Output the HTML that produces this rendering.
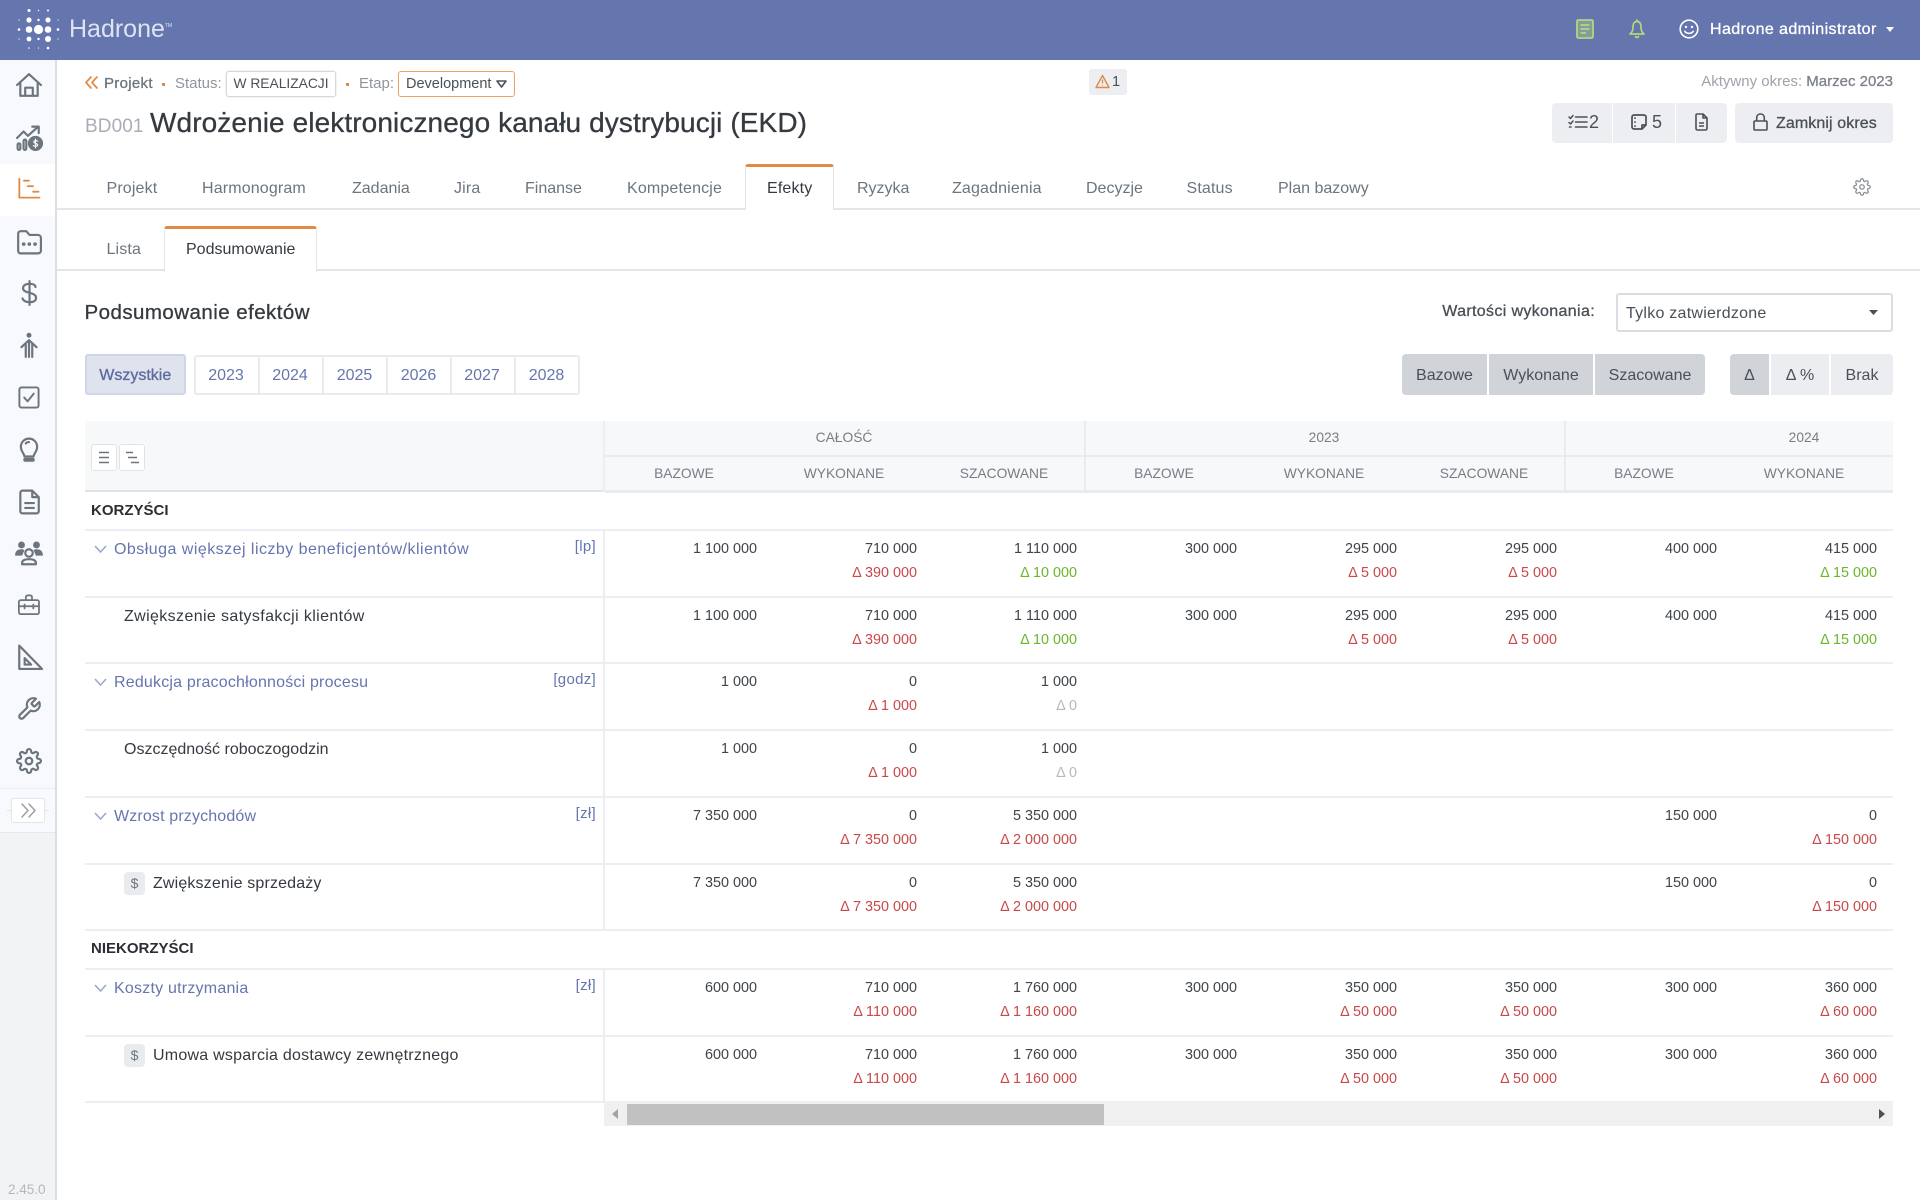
<!DOCTYPE html>
<html lang="pl">
<head>
<meta charset="utf-8">
<title>Hadrone</title>
<style>
*{box-sizing:border-box;margin:0;padding:0}
html,body{width:1920px;height:1200px;overflow:hidden;background:#fff;font-family:"Liberation Sans",sans-serif;font-size:16px;color:#343a40}
.a{position:absolute;white-space:nowrap}
svg{position:absolute;overflow:visible;fill:none}
.ic{stroke:#6c757d;stroke-width:2;stroke-linecap:round;stroke-linejoin:round;width:26px;height:26px;left:15.5px}
.m{-webkit-text-stroke:.3px currentColor}
.tab{position:absolute;top:179px;line-height:20px;font-size:16px;letter-spacing:.15px;color:#6c757d;white-space:nowrap}
.yb{position:absolute;top:0;height:36px;width:64px;color:#6576af;text-align:center;line-height:37px;font-size:16px}
.yd{position:absolute;top:355px;width:2px;height:40px;background:#e9ebef}
.gb{position:absolute;top:354px;height:41px;background:#d0d3d8;color:#495057;text-align:center;line-height:43px;font-size:16px}
.gb.off{background:#ecedf1}
.hd{position:absolute;width:160px;text-align:center;font-size:13.8px;color:#777d85;line-height:16px;white-space:nowrap}
.hl{position:absolute;background:#e9ebef}
.r{position:absolute;left:0;width:1893px;height:67px}
.r .v,.r .d{position:absolute;width:160px;text-align:right;font-size:14.4px;line-height:18px;white-space:nowrap}
.r .v{top:10px;color:#3f454b}
.r .d{top:34px}
.red{color:#c9484a}.grn{color:#6cb52d}.gry{color:#b6b9be}
.c1{left:597px}.c2{left:757px}.c3{left:917px}.c4{left:1077px}.c5{left:1237px}.c6{left:1397px}.c7{left:1557px}.c8{left:1717px}
.ln{position:absolute;left:84.5px;width:1808.5px;height:2px;background:#eceef2}
.lab{position:absolute;font-size:16px;line-height:20px;white-space:nowrap}
.gl{left:114px;top:10px;color:#6576af}
.ch{left:124px;top:10px;color:#343a40}
.ch2{left:153px;top:10px;color:#343a40}
.un{position:absolute;right:1297px;top:7px;color:#6576af;font-size:15px;line-height:20px;letter-spacing:.3px}
.cv{left:94px;top:15px;width:13px;height:8px;stroke:#9aa8cc;stroke-width:1.6}
.ds{position:absolute;left:124px;top:8px;width:21px;height:23px;border-radius:4px;background:#e9ebef;color:#6c757d;font-size:14px;text-align:center;line-height:23px}
.sec{position:absolute;left:91px;font-weight:700;font-size:15px;line-height:20px;color:#2b2f33}
</style>
</head>
<body>

<!-- top bar -->
<div class="a" style="left:0;top:0;width:1920px;height:60px;background:#6576af"></div>
<svg style="left:0;top:0;width:70px;height:60px" fill="#fff">
<g fill="#fff">
<circle cx="38.5" cy="29.5" r="4.6"/><circle cx="29" cy="29.5" r="3.3"/><circle cx="48" cy="29.5" r="3.3"/>
<circle cx="29" cy="20" r="2.6"/><circle cx="48" cy="20" r="2.6"/><circle cx="29" cy="39" r="2.4"/><circle cx="48" cy="39" r="3"/>
<circle cx="38.5" cy="20" r="1.2"/><circle cx="38.5" cy="39" r="1.2"/><circle cx="19" cy="29.5" r="1.3"/><circle cx="58" cy="29.5" r="1.3"/>
<circle cx="19" cy="20" r=".6"/><circle cx="58" cy="20" r=".6"/><circle cx="19" cy="39" r=".6"/><circle cx="58" cy="39" r=".6"/>
<circle cx="29" cy="10.5" r="1.5"/><circle cx="38.5" cy="10.5" r=".7"/><circle cx="48" cy="10.5" r="1"/>
<circle cx="29" cy="48" r=".8"/><circle cx="38.5" cy="48" r=".6"/><circle cx="48" cy="48" r="1.3"/>
</g></svg>
<div class="a" style="left:69px;top:15px;font-size:25px;line-height:28px;color:#dfe3f0">Hadrone</div>
<div class="a" style="left:165px;top:23px;font-size:5px;line-height:6px;color:#dfe3f0">TM</div>

<svg style="left:1576px;top:19px;width:18px;height:20px" viewBox="0 0 18 20"><rect x="1" y="1" width="16" height="18" rx="1.5" fill="rgba(180,214,124,.4)" stroke="#b4d67c" stroke-width="1.800"/><path d="M4.500 6H13.500M4.500 10H13.500M4.500 14H10" stroke="#b4d67c" stroke-width="1.700"/></svg>
<svg style="left:1628px;top:19px;width:18px;height:20px" viewBox="0 0 18 20"><path d="M9 2.500C5.500 2.500 5 5.500 5 8.500C5 12 3.800 13.600 2 15H16C14.200 13.600 13 12 13 8.500C13 5.500 12.500 2.500 9 2.500ZM9 1V2.500M7.500 17.500C8 18.700 10 18.700 10.500 17.500" stroke="#b4d67c" stroke-width="1.700" stroke-linejoin="round" stroke-linecap="round"/></svg>
<svg style="left:1679px;top:19px;width:20px;height:20px" viewBox="0 0 20 20"><circle cx="10" cy="10" r="8.800" stroke="#fff" stroke-width="1.600"/><circle cx="7" cy="8" r="1.200" fill="#fff"/><circle cx="13" cy="8" r="1.200" fill="#fff"/><path d="M5.800 12.300C7.500 15 12.500 15 14.200 12.300" stroke="#fff" stroke-width="1.500" stroke-linecap="round"/></svg>
<div class="a m" style="left:1710px;top:20px;font-size:16px;line-height:20px;letter-spacing:.4px;color:#fff">Hadrone administrator</div>
<svg style="left:1886px;top:27px;width:8px;height:5px"><path d="M0 0H8L4 5Z" fill="#fff"/></svg>

<!-- sidebar -->
<div class="a" style="left:0;top:60px;width:57px;height:1140px;background:#f7f9fc;border-right:2px solid #dcdee2"></div>
<div class="a" style="left:0;top:164px;width:55px;height:52px;background:#fff"></div>
<div class="a" style="left:0;top:833px;width:55px;height:367px;background:#f2f3f5"></div>
<div class="a" style="left:0;top:788px;width:55px;height:1px;background:#eceef1"></div>
<div class="a" style="left:0;top:832px;width:55px;height:1px;background:#e6e8eb"></div>
<div class="a" style="left:7px;top:810px;width:42px;height:1px;background:#e1e3e7"></div>
<div class="a" style="left:11px;top:798px;width:34px;height:25px;background:#fff;border:1px solid #e3e5e9;border-radius:3px"></div>
<svg style="left:21px;top:803px;width:15px;height:15px" viewBox="0 0 15 15"><path d="M1 1L7 7.500L1 14M8 1L14 7.500L8 14" stroke="#9a9fa6" stroke-width="1.500" stroke-linecap="round" stroke-linejoin="round"/></svg>

<svg class="ic" style="top:72px" viewBox="0 0 24 24"><path d="M1 12L12 2L23 12M4 10V22H20V10M8.500 22V14.500H15.500V22"/></svg>
<svg class="ic" style="top:125px" viewBox="0 0 24 24"><path d="M1 12L7 6L11 10L20 2M15 1.500H21V7.500"/><rect x="1.500" y="17" width="2.500" height="6" rx="1.200"/><rect x="7" y="13.500" width="2.500" height="9.500" rx="1.200"/><circle cx="18" cy="17" r="6" fill="#6c757d"/><path d="M20 15C19 14 16.500 14.300 16.500 15.600C16.500 17.500 20 16.500 20 18.500C20 19.900 17.200 20 16 19M18 13V21" stroke="#f7f9fc" stroke-width="1.100"/></svg>
<svg class="ic" style="top:177px;left:17px;width:23px;height:22px;stroke:#e28a43" viewBox="0 0 24 24"><path d="M2 2V22.500H24M7 4H12.500M11 10H17M17 16H23"/></svg>
<svg class="ic" style="top:229px" viewBox="0 0 24 24"><path d="M2 4.500C2 3 3 2 4.500 2H9.500L12.500 5.500H20C21.500 5.500 23 6.500 23 8V20C23 21.500 22 22.500 20.500 22.500H4C3 22.500 2 21.500 2 20Z"/><path d="M7 14H7.200M12.200 14H12.400M17.500 14H17.700" stroke-width="3.200"/></svg>
<svg class="ic" style="top:280px" viewBox="0 0 24 24"><path d="M18 6.500C18 4.500 15.500 3.500 12.500 3.500C9 3.500 6.500 5 6.500 7.500C6.500 13 18.500 10.500 18.500 16.500C18.500 19.500 15.500 20.500 12.500 20.500C9 20.500 6.500 19 6 17M12.500 1V23"/></svg>
<svg class="ic" style="top:332px" viewBox="0 0 24 24"><circle cx="12" cy="3" r="2.300" fill="#6c757d" stroke="none"/><path d="M5 14L12 7.500L19 14M12 9.500V23M9 10.500V23M15 10.500V23" stroke-width="2"/></svg>
<svg class="ic" style="top:386px;left:17px;width:23px;height:23px" viewBox="0 0 24 24"><rect x="2.500" y="1.500" width="20" height="21" rx="2"/><path d="M7.500 12L11 16L17.500 8"/></svg>
<svg class="ic" style="top:437px" viewBox="0 0 24 24"><path d="M7.800 18C7.500 15 4.500 13.500 4.500 9C4.500 4.800 7.800 1.500 12 1.500C16.200 1.500 19.500 4.800 19.500 9C19.500 13.500 16.500 15 16.200 18ZM9 6C9.800 5 10.800 4.700 12 4.700"/><path d="M8.500 21H15.500" stroke-width="3.600"/></svg>
<svg class="ic" style="top:489px" viewBox="0 0 24 24"><path d="M4 3.500C4 2.300 5 1.500 6 1.500H15L21 7.500V20.500C21 21.700 20 22.500 19 22.500H6C5 22.500 4 21.700 4 20.500ZM15 1.500V7.500H21M8.500 13H16.500M8.500 17.500H16.500"/></svg>
<svg class="ic" style="top:540px;width:30px;left:13.500px" viewBox="0 0 28 24"><circle cx="7" cy="4.500" r="3.200" fill="#6c757d" stroke="none"/><circle cx="21" cy="4.500" r="3.200" fill="#6c757d" stroke="none"/><path d="M1 14.500C1 10.500 3 8.500 7 8.500C8 8.500 9 8.800 9.800 9.300L7.500 14.500ZM27 14.500C27 10.500 25 8.500 21 8.500C20 8.500 19 8.800 18.200 9.300L20.500 14.500Z" fill="#6c757d" stroke="none"/><circle cx="14" cy="12" r="3.500"/><path d="M7.500 22.500V21.500C7.500 19 10 17.800 14 17.800C18 17.800 20.500 19 20.500 21.500V22.500Z"/></svg>
<svg class="ic" style="top:594px;left:17px;width:23px;height:21px" viewBox="0 0 24 24"><path d="M9 7V3.500C9 2.500 9.800 1.500 11 1.500H14C15.200 1.500 16 2.500 16 3.500V7M3 7H22C23 7 24 8 24 9V21C24 22 23 23 22 23H3C2 23 1 22 1 21V9C1 8 2 7 3 7ZM1 14H24M7.500 12V16.500M17.500 12V16.500"/></svg>
<svg class="ic" style="top:644px" viewBox="0 0 24 24"><path d="M3 1.500L24 23H3ZM8 13L14 19H8Z"/></svg>
<svg class="ic" style="top:696px" viewBox="0 0 24 24"><path d="M14.700 6.300a1 1 0 0 0 0 1.400l1.600 1.600a1 1 0 0 0 1.400 0l3.770-3.770a6 6 0 0 1-7.940 7.940l-6.910 6.910a2.120 2.120 0 0 1-3-3l6.910-6.910a6 6 0 0 1 7.940-7.940l-3.760 3.760z"/></svg>
<svg class="ic" style="top:748px" viewBox="0 0 24 24"><circle cx="12" cy="12" r="3"/><path d="M19.400 15a1.650 1.650 0 0 0 .33 1.820l.06.06a2 2 0 0 1 0 2.830 2 2 0 0 1-2.830 0l-.06-.06a1.650 1.650 0 0 0-1.820-.33 1.650 1.650 0 0 0-1 1.510V21a2 2 0 0 1-2 2 2 2 0 0 1-2-2v-.09A1.650 1.650 0 0 0 9 19.400a1.650 1.650 0 0 0-1.820.33l-.06.06a2 2 0 0 1-2.830 0 2 2 0 0 1 0-2.830l.06-.06a1.650 1.650 0 0 0 .33-1.820 1.650 1.650 0 0 0-1.510-1H3a2 2 0 0 1-2-2 2 2 0 0 1 2-2h.09A1.650 1.650 0 0 0 4.600 9a1.650 1.650 0 0 0-.33-1.820l-.06-.06a2 2 0 0 1 0-2.830 2 2 0 0 1 2.830 0l.06.06a1.650 1.650 0 0 0 1.820.33H9a1.650 1.650 0 0 0 1-1.510V3a2 2 0 0 1 2-2 2 2 0 0 1 2 2v.09a1.650 1.650 0 0 0 1 1.510 1.650 1.650 0 0 0 1.820-.33l.06-.06a2 2 0 0 1 2.830 0 2 2 0 0 1 0 2.830l-.06.06a1.650 1.650 0 0 0-.33 1.820V9a1.650 1.650 0 0 0 1.510 1H21a2 2 0 0 1 2 2 2 2 0 0 1-2 2h-.09a1.650 1.650 0 0 0-1.510 1z"/></svg>
<div class="a" style="left:8px;top:1182px;font-size:13.500px;line-height:15px;color:#b4b8bc">2.45.0</div>

<!-- breadcrumb -->
<svg style="left:85px;top:76px;width:13px;height:13px" viewBox="0 0 13 13"><path d="M6 1L1 6.500L6 12M12 1L7 6.500L12 12" stroke="#e28a43" stroke-width="1.700" stroke-linecap="round" stroke-linejoin="round"/></svg>
<div class="a m" style="left:104px;top:75px;font-size:15px;line-height:18px;letter-spacing:.3px;color:#6c757d">Projekt</div>
<div class="a" style="left:162px;top:82.500px;width:3px;height:3px;background:#e28a43"></div>
<div class="a" style="left:175px;top:75px;font-size:15px;line-height:18px;color:#8f959c">Status:</div>
<div class="a" style="left:226px;top:71px;width:110px;height:26px;border:1px solid #d5d8dc;border-radius:3px;box-shadow:0 0 0 .5px #e3e5e8;font-size:13.800px;line-height:24px;text-align:center;color:#495057">W REALIZACJI</div>
<div class="a" style="left:346px;top:82.500px;width:3px;height:3px;background:#e28a43"></div>
<div class="a" style="left:359px;top:75px;font-size:15px;line-height:18px;color:#8f959c">Etap:</div>
<div class="a" style="left:398px;top:71px;width:117px;height:26px;border:1.500px solid #eaa365;border-radius:3px;font-size:14.500px;line-height:24px;padding-left:7px;color:#495057">Development</div>
<svg style="left:496px;top:80px;width:11px;height:8px" viewBox="0 0 11 8"><path d="M1 1H10L5.500 7Z" stroke="#495057" stroke-width="1.600" stroke-linejoin="round"/></svg>

<div class="a" style="left:85px;top:114px;font-size:19px;line-height:26px;letter-spacing:.1px;color:#a9adb6">BD001</div>
<div class="a m" style="left:150px;top:106px;font-size:28px;line-height:34px;letter-spacing:.1px;color:#343a40">Wdrożenie elektronicznego kanału dystrybucji (EKD)</div>

<!-- warning + period -->
<div class="a" style="left:1089px;top:69px;width:38px;height:26px;background:#eceef2;border-radius:3px"></div>
<svg style="left:1095px;top:74px;width:15px;height:15px" viewBox="0 0 15 15"><path d="M7.500 1.500L14 13.500H1Z" stroke="#e28a43" stroke-width="1.400" stroke-linejoin="round"/><path d="M7.500 5.500V9.500M7.500 11V11.600" stroke="#e28a43" stroke-width="1.300"/></svg>
<div class="a" style="left:1112px;top:73px;font-size:14.500px;line-height:18px;color:#495057">1</div>
<div class="a" style="right:27px;top:73px;font-size:15px;line-height:18px;color:#9ea3aa">Aktywny okres: <span class="m" style="color:#7d838b">Marzec 2023</span></div>

<!-- header buttons -->
<div class="a" style="left:1552px;top:103px;width:60px;height:40px;background:#eceef1;border-radius:4px 0 0 4px"></div>
<div class="a" style="left:1613px;top:103px;width:62px;height:40px;background:#eceef1"></div>
<div class="a" style="left:1676px;top:103px;width:51px;height:40px;background:#eceef1;border-radius:0 4px 4px 0"></div>
<div class="a" style="left:1735px;top:103px;width:158px;height:40px;background:#eceef1;border-radius:4px"></div>
<svg style="left:1568px;top:114px;width:20px;height:16px" viewBox="0 0 20 16"><path d="M1 3L2.500 4.500L5 1.500M1 8.500L2.500 10L5 7M7.500 3H19M7.500 8H19M7.500 13H19M1.500 13H3" stroke="#495057" stroke-width="1.500" stroke-linecap="round" stroke-linejoin="round"/></svg>
<div class="a" style="left:1589px;top:112px;font-size:18px;line-height:20px;color:#495057">2</div>
<svg style="left:1631px;top:114px;width:16px;height:16px" viewBox="0 0 16 16"><path d="M3 1H13C14 1 15 2 15 3V11L11 15H3C2 15 1 14 1 13V3C1 2 2 1 3 1ZM11 15V11H15M4 4V4.200M4 8V8.200M4 12V12.200" stroke="#495057" stroke-width="1.700" stroke-linejoin="round" stroke-linecap="round"/></svg>
<div class="a" style="left:1652px;top:112px;font-size:18px;line-height:20px;color:#495057">5</div>
<svg style="left:1695px;top:113px;width:13px;height:18px" viewBox="0 0 13 18"><path d="M2 1H8L12 5V15.500C12 16.300 11.300 17 10.500 17H2.500C1.700 17 1 16.300 1 15.500V2C1 1.500 1.500 1 2 1ZM8 1V5H12M4 10H9M4 13H9" stroke="#495057" stroke-width="1.600" stroke-linejoin="round"/></svg>
<svg style="left:1753px;top:113px;width:15px;height:18px" viewBox="0 0 15 18"><path d="M2 8H13C13.600 8 14 8.400 14 9V16C14 16.600 13.600 17 13 17H2C1.400 17 1 16.600 1 16V9C1 8.400 1.400 8 2 8ZM3.700 8V4.700C3.700 2.500 5.300 1 7.500 1C9.700 1 11.300 2.500 11.300 4.700V8" stroke="#495057" stroke-width="1.600"/></svg>
<div class="a m" style="left:1776px;top:114px;font-size:16px;line-height:20px;letter-spacing:.1px;color:#495057">Zamknij okres</div>

<!-- main tabs -->
<div class="a" style="left:57px;top:208px;width:1863px;height:1.500px;background:#e3e6ea"></div>
<div class="a" style="left:745px;top:164px;width:89px;height:46px;background:#fff;border:1.500px solid #e3e6ea;border-top:3px solid #e28a43;border-bottom:none;border-radius:3px 3px 0 0"></div>
<div class="tab" style="left:106.500px">Projekt</div>
<div class="tab" style="left:202px">Harmonogram</div>
<div class="tab" style="left:352px;letter-spacing:0">Zadania</div>
<div class="tab" style="left:454px">Jira</div>
<div class="tab" style="left:525px;letter-spacing:0">Finanse</div>
<div class="tab" style="left:627px">Kompetencje</div>
<div class="tab" style="left:767px;color:#343a40">Efekty</div>
<div class="tab" style="left:857px;letter-spacing:0">Ryzyka</div>
<div class="tab" style="left:952px">Zagadnienia</div>
<div class="tab" style="left:1086px;letter-spacing:0">Decyzje</div>
<div class="tab" style="left:1186.500px">Status</div>
<div class="tab" style="left:1278px;letter-spacing:0">Plan bazowy</div>
<svg style="left:1853px;top:178px;width:18px;height:18px;stroke:#8b9096;stroke-width:1.700" viewBox="0 0 24 24"><circle cx="12" cy="12" r="3"/><path d="M19.400 15a1.650 1.650 0 0 0 .33 1.820l.06.06a2 2 0 0 1 0 2.830 2 2 0 0 1-2.830 0l-.06-.06a1.650 1.650 0 0 0-1.820-.33 1.650 1.650 0 0 0-1 1.510V21a2 2 0 0 1-2 2 2 2 0 0 1-2-2v-.09A1.650 1.650 0 0 0 9 19.400a1.650 1.650 0 0 0-1.820.33l-.06.06a2 2 0 0 1-2.830 0 2 2 0 0 1 0-2.830l.06-.06a1.650 1.650 0 0 0 .33-1.820 1.650 1.650 0 0 0-1.510-1H3a2 2 0 0 1-2-2 2 2 0 0 1 2-2h.09A1.650 1.650 0 0 0 4.600 9a1.650 1.650 0 0 0-.33-1.820l-.06-.06a2 2 0 0 1 0-2.830 2 2 0 0 1 2.830 0l.06.06a1.650 1.650 0 0 0 1.820.33H9a1.650 1.650 0 0 0 1-1.510V3a2 2 0 0 1 2-2 2 2 0 0 1 2 2v.09a1.650 1.650 0 0 0 1 1.510 1.650 1.650 0 0 0 1.820-.33l.06-.06a2 2 0 0 1 2.830 0 2 2 0 0 1 0 2.830l-.06.06a1.650 1.650 0 0 0-.33 1.820V9a1.650 1.650 0 0 0 1.510 1H21a2 2 0 0 1 2 2 2 2 0 0 1-2 2h-.09a1.650 1.650 0 0 0-1.510 1z"/></svg>

<!-- sub tabs -->
<div class="a" style="left:57px;top:269px;width:1863px;height:1.500px;background:#e3e5e9"></div>
<div class="a" style="left:164px;top:226px;width:153px;height:46px;background:#fff;border:1.500px solid #e3e5e9;border-top:3px solid #e28a43;border-bottom:none;border-radius:3px 3px 0 0"></div>
<div class="tab" style="left:106.500px;top:240px">Lista</div>
<div class="tab" style="left:186px;top:240px;letter-spacing:0;color:#343a40">Podsumowanie</div>

<!-- section head -->
<div class="a m" style="left:84.500px;top:300px;font-size:20.500px;line-height:26px;letter-spacing:.45px;color:#343a40">Podsumowanie efektów</div>
<div class="a m" style="right:325px;top:302px;font-size:16px;line-height:20px;letter-spacing:.35px;color:#495057">Wartości wykonania:</div>
<div class="a" style="left:1616px;top:293px;width:277px;height:39px;border:2px solid #dcdde3;border-radius:3px;font-size:16px;line-height:37px;letter-spacing:.25px;padding-left:8px;color:#495057">Tylko zatwierdzone</div>
<svg style="left:1869px;top:310px;width:9px;height:5px"><path d="M0 0H9L4.500 5Z" fill="#495057"/></svg>

<!-- filters -->
<div class="a m" style="left:84.500px;top:354px;width:101.500px;height:41px;background:#dfe3ee;border:2px solid #cfd6e6;border-radius:3px;text-align:center;line-height:39px;font-size:16px;color:#5c6b9f">Wszystkie</div>
<div class="a" style="left:194px;top:355px;width:386px;height:40px;border:2px solid #e9ebef;border-radius:3px">
<div class="yb" style="left:-2px">2023</div><div class="yb" style="left:62px">2024</div><div class="yb" style="left:126.500px">2025</div><div class="yb" style="left:190.500px">2026</div><div class="yb" style="left:254px">2027</div><div class="yb" style="left:318.500px">2028</div>
</div>
<div class="yd" style="left:258px"></div><div class="yd" style="left:322px"></div><div class="yd" style="left:386px"></div><div class="yd" style="left:450px"></div><div class="yd" style="left:514px"></div>

<div class="gb" style="left:1402px;width:85px;border-radius:4px 0 0 4px">Bazowe</div>
<div class="gb" style="left:1489px;width:104px">Wykonane</div>
<div class="gb" style="left:1595px;width:110px;border-radius:0 4px 4px 0">Szacowane</div>
<div class="gb" style="left:1730px;width:39px;border-radius:4px 0 0 4px">Δ</div>
<div class="gb off" style="left:1771px;width:58px">Δ %</div>
<div class="gb off" style="left:1831px;width:62px;border-radius:0 4px 4px 0">Brak</div>

<!-- table header -->
<div class="a" style="left:84.500px;top:421px;width:1808.500px;height:70px;background:#f7f8fa"></div>
<div class="hl" style="left:84.500px;top:490px;width:518.500px;height:2px;background:#e1e3e7"></div>
<div class="hl" style="left:605px;top:455px;width:1288px;height:2px"></div>
<div class="hl" style="left:605px;top:490px;width:1288px;height:2.500px"></div>
<div class="hl" style="left:603px;top:421px;width:2px;height:71px;background:#eceef2"></div>
<div class="hl" style="left:603px;top:530px;width:2px;height:400px;background:#eceef2"></div>
<div class="hl" style="left:603px;top:968px;width:2px;height:134px;background:#eceef2"></div>
<div class="hl" style="left:1084px;top:421px;width:2px;height:71px"></div>
<div class="hl" style="left:1564px;top:421px;width:2px;height:71px"></div>

<div class="a" style="left:91px;top:444px;width:26px;height:26.500px;background:#fff;border:1.500px solid #e2e3e7;border-radius:3px"></div>
<div class="a" style="left:119px;top:444px;width:26px;height:26.500px;background:#fff;border:1.500px solid #e2e3e7;border-radius:3px"></div>
<svg style="left:99px;top:451px;width:42px;height:12px" viewBox="0 0 42 12"><path d="M0 1.500H10M0 6.500H10M0 11.500H10M27 1.500H34M29 6.500H38M32 11.500H40" stroke="#6c757d" stroke-width="1.400"/></svg>

<div class="hd" style="left:764px;top:430px;color:#777d85">CAŁOŚĆ</div>
<div class="hd" style="left:1244px;top:430px">2023</div>
<div class="hd" style="left:1724px;top:430px">2024</div>
<div class="hd" style="left:604px;top:466px">BAZOWE</div>
<div class="hd" style="left:764px;top:466px">WYKONANE</div>
<div class="hd" style="left:924px;top:466px">SZACOWANE</div>
<div class="hd" style="left:1084px;top:466px">BAZOWE</div>
<div class="hd" style="left:1244px;top:466px">WYKONANE</div>
<div class="hd" style="left:1404px;top:466px">SZACOWANE</div>
<div class="hd" style="left:1564px;top:466px">BAZOWE</div>
<div class="hd" style="left:1724px;top:466px">WYKONANE</div>

<!-- lines -->
<div class="ln" style="top:529px"></div>
<div class="ln" style="top:596px"></div>
<div class="ln" style="top:662px"></div>
<div class="ln" style="top:729px"></div>
<div class="ln" style="top:796px"></div>
<div class="ln" style="top:863px"></div>
<div class="ln" style="top:929px"></div>
<div class="ln" style="top:968px"></div>
<div class="ln" style="top:1035px"></div>
<div class="ln" style="top:1101px"></div>

<div class="sec" style="top:500.500px">KORZYŚCI</div>
<div class="sec" style="top:939px">NIEKORZYŚCI</div>

<!-- rows -->
<div class="r" style="top:530px">
<svg class="cv" viewBox="0 0 13 8"><path d="M1 1L6.500 7L12 1"/></svg><div class="lab gl" style="letter-spacing:.47px">Obsługa większej liczby beneficjentów/klientów</div><div class="un">[lp]</div>
<span class="v c1">1 100 000</span><span class="v c2">710 000</span><span class="d c2 red">Δ 390 000</span><span class="v c3">1 110 000</span><span class="d c3 grn">Δ 10 000</span><span class="v c4">300 000</span><span class="v c5">295 000</span><span class="d c5 red">Δ 5 000</span><span class="v c6">295 000</span><span class="d c6 red">Δ 5 000</span><span class="v c7">400 000</span><span class="v c8">415 000</span><span class="d c8 grn">Δ 15 000</span>
</div>
<div class="r" style="top:597px">
<div class="lab ch" style="letter-spacing:.38px">Zwiększenie satysfakcji klientów</div>
<span class="v c1">1 100 000</span><span class="v c2">710 000</span><span class="d c2 red">Δ 390 000</span><span class="v c3">1 110 000</span><span class="d c3 grn">Δ 10 000</span><span class="v c4">300 000</span><span class="v c5">295 000</span><span class="d c5 red">Δ 5 000</span><span class="v c6">295 000</span><span class="d c6 red">Δ 5 000</span><span class="v c7">400 000</span><span class="v c8">415 000</span><span class="d c8 grn">Δ 15 000</span>
</div>
<div class="r" style="top:663px">
<svg class="cv" viewBox="0 0 13 8"><path d="M1 1L6.500 7L12 1"/></svg><div class="lab gl" style="letter-spacing:.19px">Redukcja pracochłonności procesu</div><div class="un">[godz]</div>
<span class="v c1">1 000</span><span class="v c2">0</span><span class="d c2 red">Δ 1 000</span><span class="v c3">1 000</span><span class="d c3 gry">Δ 0</span>
</div>
<div class="r" style="top:730px">
<div class="lab ch">Oszczędność roboczogodzin</div>
<span class="v c1">1 000</span><span class="v c2">0</span><span class="d c2 red">Δ 1 000</span><span class="v c3">1 000</span><span class="d c3 gry">Δ 0</span>
</div>
<div class="r" style="top:797px">
<svg class="cv" viewBox="0 0 13 8"><path d="M1 1L6.500 7L12 1"/></svg><div class="lab gl" style="letter-spacing:.15px">Wzrost przychodów</div><div class="un">[zł]</div>
<span class="v c1">7 350 000</span><span class="v c2">0</span><span class="d c2 red">Δ 7 350 000</span><span class="v c3">5 350 000</span><span class="d c3 red">Δ 2 000 000</span><span class="v c7">150 000</span><span class="v c8">0</span><span class="d c8 red">Δ 150 000</span>
</div>
<div class="r" style="top:864px">
<div class="ds">$</div><div class="lab ch2" style="letter-spacing:.15px">Zwiększenie sprzedaży</div>
<span class="v c1">7 350 000</span><span class="v c2">0</span><span class="d c2 red">Δ 7 350 000</span><span class="v c3">5 350 000</span><span class="d c3 red">Δ 2 000 000</span><span class="v c7">150 000</span><span class="v c8">0</span><span class="d c8 red">Δ 150 000</span>
</div>
<div class="r" style="top:969px">
<svg class="cv" viewBox="0 0 13 8"><path d="M1 1L6.500 7L12 1"/></svg><div class="lab gl" style="letter-spacing:.22px">Koszty utrzymania</div><div class="un">[zł]</div>
<span class="v c1">600 000</span><span class="v c2">710 000</span><span class="d c2 red">Δ 110 000</span><span class="v c3">1 760 000</span><span class="d c3 red">Δ 1 160 000</span><span class="v c4">300 000</span><span class="v c5">350 000</span><span class="d c5 red">Δ 50 000</span><span class="v c6">350 000</span><span class="d c6 red">Δ 50 000</span><span class="v c7">300 000</span><span class="v c8">360 000</span><span class="d c8 red">Δ 60 000</span>
</div>
<div class="r" style="top:1036px">
<div class="ds">$</div><div class="lab ch2" style="letter-spacing:.24px">Umowa wsparcia dostawcy zewnętrznego</div>
<span class="v c1">600 000</span><span class="v c2">710 000</span><span class="d c2 red">Δ 110 000</span><span class="v c3">1 760 000</span><span class="d c3 red">Δ 1 160 000</span><span class="v c4">300 000</span><span class="v c5">350 000</span><span class="d c5 red">Δ 50 000</span><span class="v c6">350 000</span><span class="d c6 red">Δ 50 000</span><span class="v c7">300 000</span><span class="v c8">360 000</span><span class="d c8 red">Δ 60 000</span>
</div>

<!-- scrollbar -->
<div class="a" style="left:604px;top:1102px;width:1289px;height:24px;background:#f0f0f0"></div>
<div class="a" style="left:627px;top:1104px;width:477px;height:21px;background:#c1c1c1"></div>
<svg style="left:612px;top:1109px;width:6px;height:10px"><path d="M6 0V10L0 5Z" fill="#a3a3a3"/></svg>
<svg style="left:1879px;top:1109px;width:6px;height:10px"><path d="M0 0V10L6 5Z" fill="#505050"/></svg>

</body>
</html>
